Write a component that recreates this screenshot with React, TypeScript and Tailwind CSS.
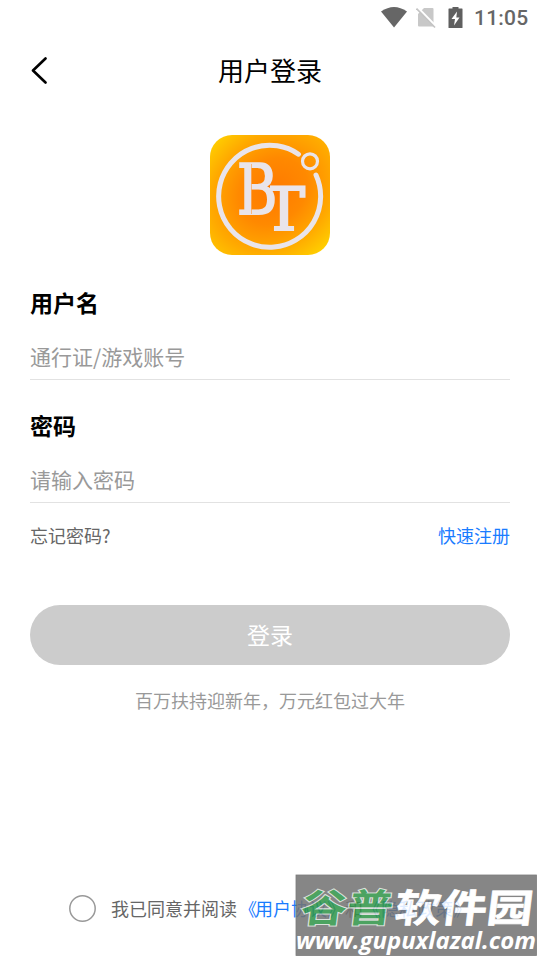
import React from 'react';

function StatusBar() {
  return (
    <div className="flex h-9 items-center pl-[381px]">
      <svg className="h-[22px] w-[26px]" viewBox="0 0 26 22" fill="#666">
        <path d="M13 20.500 0 4.500Q13-4.500 26 4.500Z" />
      </svg>
      <svg className="ml-[9px] h-[22px] w-5" viewBox="0 0 20 22">
        <path d="M8 1H16.500a1 1 0 0 1 1 1V19.500H3a1 1 0 0 1-1-1V7Z" fill="#c8c8c8" />
        <path d="M1.500 .500 20.500 20" stroke="#fff" strokeWidth="2.500" />
        <path d="M.5 1.500 19 20.500" stroke="#c4c4c4" strokeWidth="1.700" />
      </svg>
      <svg className="ml-[12px] h-[22px] w-[15px]" viewBox="0 0 15 22">
        <path d="M1.500 1.500H4.500V-.5h6v2h3.500a.5 .5 0 0 1 .5 .5V20.500a.5 .5 0 0 1-.5 .5h-13a.5 .5 0 0 1-.5-.5V2a.5 .5 0 0 1 .5-.5Z" fill="#5f5f5f" />
        <path d="M9 4.500 3.500 12H7l-1 6.500L11.500 10.500H8.300Z" fill="#fff" />
      </svg>
      <span className="ml-[11px] pt-px font-[Roboto,sans-serif] text-[21px] leading-none font-medium tracking-[0.2px] text-[#666]">11:05</span>
    </div>
  );
}

function Logo() {
  return (
    <svg className="mx-auto mt-[35px] block h-[120px] w-[120px] rounded-[22px]" viewBox="0 0 120 120">
      <defs>
        <radialGradient id="glow" gradientUnits="userSpaceOnUse" cx="0" cy="0" r="1" gradientTransform="translate(63 56) rotate(-40) scale(92 76)">
          <stop offset="0" stopColor="#ff7900" />
          <stop offset="0.4" stopColor="#ff8900" />
          <stop offset="0.72" stopColor="#ffa900" />
          <stop offset="1" stopColor="#ffcd00" />
        </radialGradient>
        <clipPath id="right-letter">
          <rect x="60" y="40" width="50" height="70" />
        </clipPath>
      </defs>
      <rect width="120" height="120" fill="url(#glow)" />
      <g fill="none" stroke="#e9e4ea" strokeLinecap="round">
        <path d="M88.500 19.200A51 51 0 1 0 106 40" strokeWidth="5" />
        <circle cx="100" cy="26.300" r="7.500" strokeWidth="3.200" />
      </g>
      <g fill="#e9e4ea" stroke="#e9e4ea" fontFamily="'DejaVu Serif', serif">
        <text transform="translate(27 79) scale(.8 1)" fontSize="68.500" strokeWidth="2">B</text>
        <g clipPath="url(#right-letter)">
          <text transform="translate(53 95.300) scale(1.050 1)" fontSize="60" strokeWidth="2">T</text>
        </g>
      </g>
      <path d="M41.500 29V79" stroke="#ff9a3c" strokeWidth=".6" />
    </svg>
  );
}

function Field({ label, hint }: { label: string; hint: string }) {
  return (
    <div className="h-[123px] border-b border-[#e2e2e2]">
      <div className="pt-7 text-[23px] leading-[34px] font-bold text-black">{label}</div>
      <div className="pt-[22px] text-[21px] leading-[31px] text-[#999]">{hint}</div>
    </div>
  );
}

function Watermark() {
  return (
    <svg className="absolute top-[874px] left-[295px] h-[83px] w-[245px] opacity-[.86]" viewBox="0 0 245 83">
      <rect x="1" y="1" width="240.500" height="80.500" fill="#737373" stroke="#666" strokeWidth=".8" />
      <g fontFamily="'Noto Sans CJK SC', sans-serif" fontWeight="700" fontSize="46">
        <g transform="translate(4.500 47.500) skewX(-7) scale(1 .84)">
          <text fill="#2f9548" stroke="#d6ddd7" strokeWidth="2.500" paintOrder="stroke" textLength="92">谷普</text>
          <text x="94" fill="#fff" stroke="#fff" strokeWidth=".8" textLength="138">软件园</text>
        </g>
      </g>
      <text x="1" y="74.500" fill="#fff" fontFamily="'Open Sans', sans-serif" fontWeight="700" fontStyle="italic" fontSize="24" textLength="240" lengthAdjust="spacingAndGlyphs">www.gupuxlazal.com</text>
    </svg>
  );
}

export default function App() {
  return (
    <div lang="zh-CN" className="relative flex h-[960px] w-[540px] flex-col overflow-hidden bg-white font-['Noto_Sans_CJK_SC',sans-serif]">
      <StatusBar />
      <header className="grid h-16 grid-cols-[60px_1fr_60px] items-center pt-[3px]">
        <svg className="ml-[30px] h-7 w-5" viewBox="0 0 20 28" fill="none" stroke="#000" strokeWidth="2.600" strokeLinecap="round" strokeLinejoin="round">
          <path d="M15.500 2.500 3 14.500 15.500 26.500" />
        </svg>
        <h1 className="text-center text-[26px] leading-10 text-black">用户登录</h1>
      </header>
      <Logo />
      <main className="flex flex-col px-[30px] pt-[2px]">
        <Field label="用户名" hint="通行证/游戏账号" />
        <Field label="密码" hint="请输入密码" />
        <div className="flex justify-between pt-[19px] text-[18px] leading-[27px]">
          <span className="text-[#666]">忘记密码?</span>
          <span className="text-[#1a7cff]">快速注册</span>
        </div>
        <button className="mt-14 h-[60px] rounded-full bg-[#ccc] pb-[2px] text-[23px] leading-[34px] text-white">登录</button>
        <p className="pt-[22px] text-center text-[18px] leading-[27px] text-[#999]">百万扶持迎新年，万元红包过大年</p>
      </main>
      <div className="mt-auto flex items-center pb-[38px] pl-[69px] text-[18px] leading-[27px] whitespace-nowrap text-[#666]">
        <svg className="mr-[15px] h-[27px] w-[27px]" viewBox="0 0 27 27" fill="none" stroke="#999" strokeWidth="1.500">
          <circle cx="13.500" cy="13.500" r="12.700" />
        </svg>
        我已同意并阅读
        <span className="text-[#1a7cff]"><span className="mr-[-2px] ml-[2px]">《</span>用户协议》</span>和
        <span className="text-[#1a7cff]">《隐私政策》</span>
      </div>
      <Watermark />
    </div>
  );
}
